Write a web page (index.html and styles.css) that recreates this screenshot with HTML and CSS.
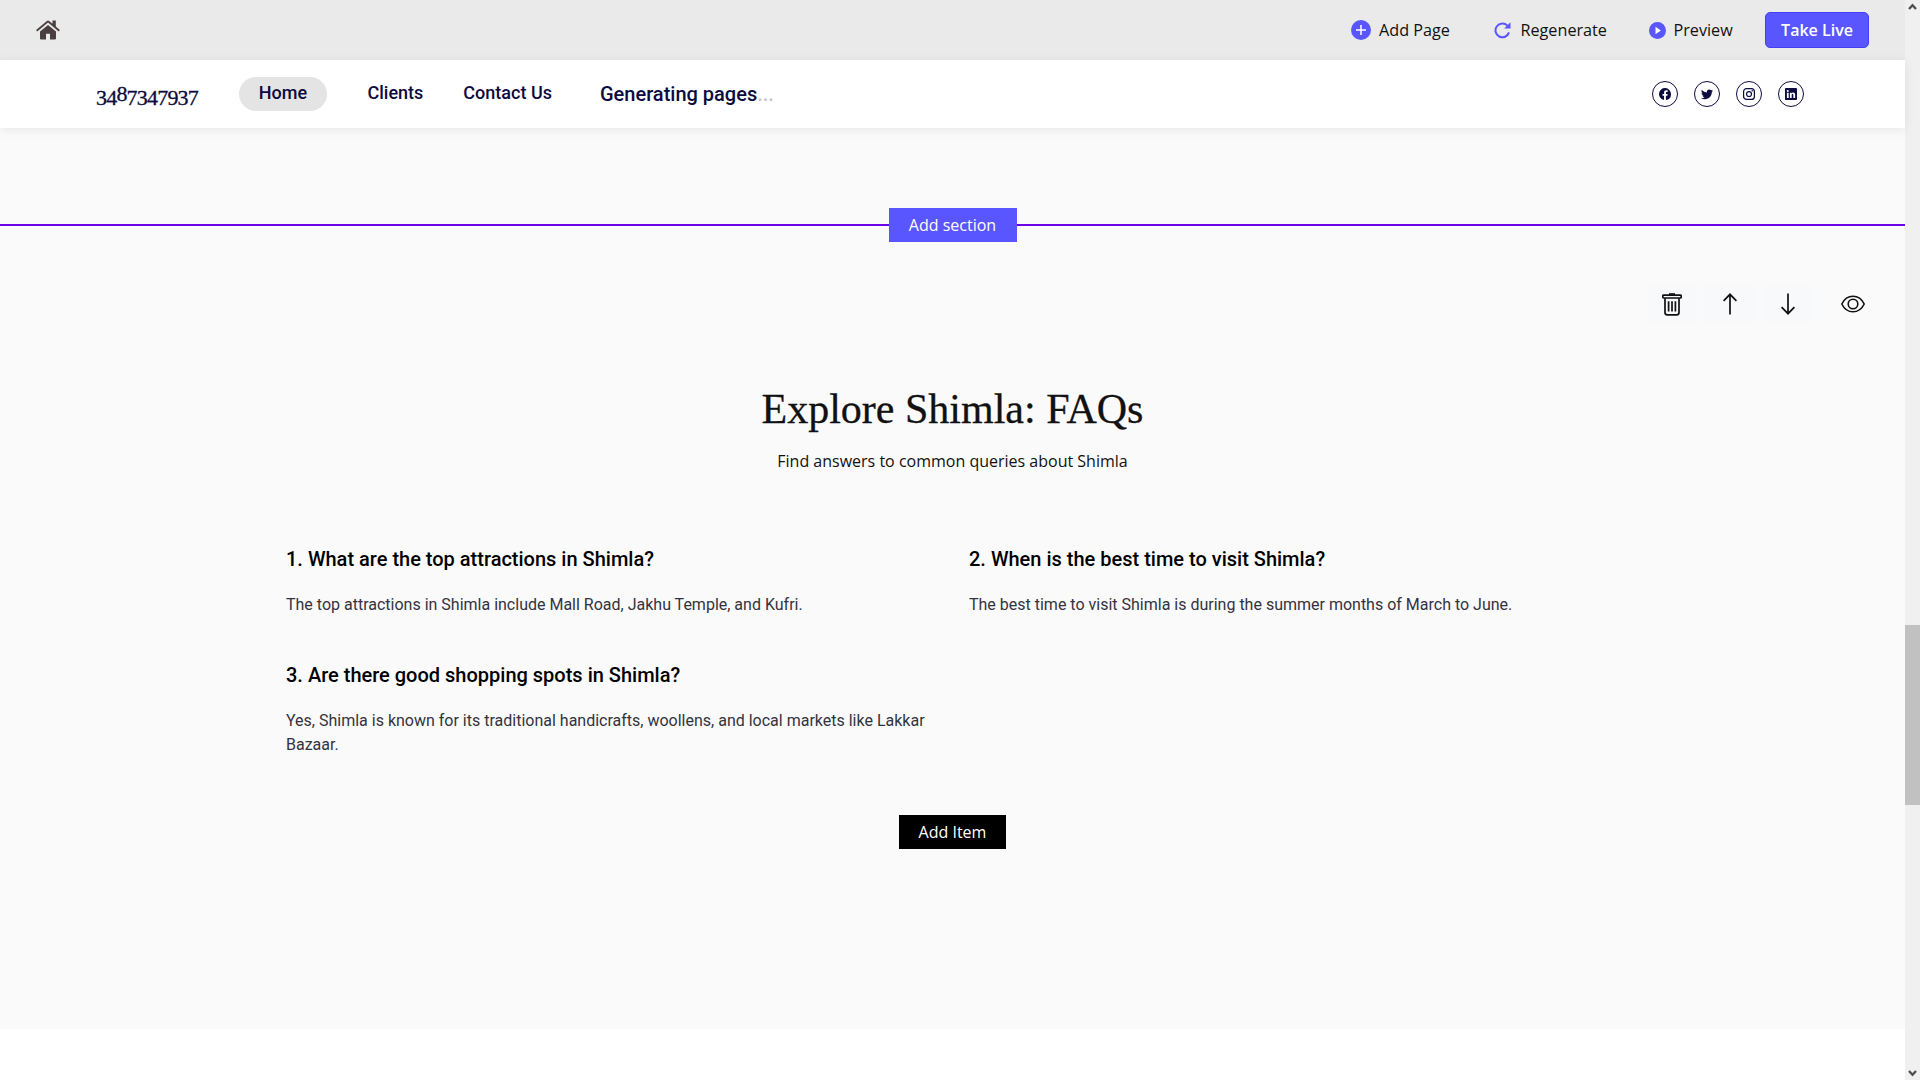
FILE: index.html
```html
<!DOCTYPE html>
<html lang="en">
<head>
<meta charset="utf-8">
<title>Explore Shimla: FAQs</title>
<link rel="stylesheet" href="styles.css">
</head>
<body>
<div class="window">
  <div class="page">
    <div class="toolbar">
      <svg class="home-icon" width="24" height="20" viewBox="0 0 24 20" fill="#4a3f40"><path d="M1.2 11.4 12 2.6l10.8 8.8 1.1-1.4-4.1-3.4V.6h-3.3v3.2L13.100.9a1.700 1.700 0 0 0-2.200 0L.1 10z"/><path d="M12 4.900 4 11.400V18.600c0 .5.3.8.8.8H10v-5.600h4v5.600h5.200c.5 0 .8-.3.8-.8v-7.200z"/></svg>
      <div class="tools">
        <a class="tool add-page"><svg width="20" height="20" viewBox="0 0 20 20"><circle cx="10" cy="10" r="10" fill="#5956ff"/><path d="M10 5v10M5 10h10" stroke="#fff" stroke-width="1.500"/></svg>Add Page</a>
        <a class="tool regenerate"><svg width="17" height="17" viewBox="0 0 17 17" fill="none" stroke="#5956ff" stroke-width="2"><path d="M15 10.400A6.900 6.900 0 1 1 13.400 3.600"/><path d="M16.500.3v6.300h-6.300z" fill="#5956ff" stroke="none"/></svg>Regenerate</a>
        <a class="tool preview"><svg width="17" height="17" viewBox="0 0 17 17"><circle cx="8.500" cy="8.500" r="8.500" fill="#5956ff"/><path d="M6.500 4.800v7.400l5.300-3.700z" fill="#fff"/></svg>Preview</a>
        <a class="take-live">Take Live</a>
      </div>
    </div>
    <header class="site-header">
      <div class="brand"><span class="low">34</span>8<span class="low">7347937</span></div>
      <nav class="nav">
        <a class="nav-item active">Home</a>
        <a class="nav-item clients">Clients</a>
        <a class="nav-item contact">Contact Us</a>
        <span class="generating">Generating pages<span class="dots">...</span></span>
      </nav>
      <div class="social">
        <a class="social-link"><svg width="12" height="12" viewBox="0 0 16 16" fill="#0c0a3e"><path d="M16 8.050a8 8 0 1 0-9.250 7.950v-5.620H4.720V8.050h2.030V6.280c0-2.020 1.200-3.130 3.020-3.130.88 0 1.790.16 1.790.16v1.980h-1c-1 0-1.310.62-1.310 1.260v1.500h2.220l-.35 2.330H9.250V16A8 8 0 0 0 16 8.050"/></svg></a>
        <a class="social-link"><svg width="12" height="12" viewBox="0 0 16 16" fill="#0c0a3e"><path d="M5.030 15c6.040 0 9.340-5 9.340-9.330v-.43A6.700 6.700 0 0 0 16 3.540a6.500 6.500 0 0 1-1.890.52 3.300 3.300 0 0 0 1.450-1.820 6.600 6.600 0 0 1-2.090.8 3.290 3.290 0 0 0-5.590 3A9.320 9.320 0 0 1 1.110 2.600a3.300 3.300 0 0 0 1.020 4.380A3.300 3.300 0 0 1 .64 6.580v.04a3.300 3.300 0 0 0 2.630 3.220 3.200 3.200 0 0 1-1.480.06 3.300 3.300 0 0 0 3.070 2.280A6.600 6.600 0 0 1 0 13.530 9.300 9.300 0 0 0 5.030 15"/></svg></a>
        <a class="social-link"><svg width="12" height="12" viewBox="0 0 16 16" fill="none" stroke="#0c0a3e" stroke-width="1.600"><rect x=".8" y=".8" width="14.400" height="14.400" rx="4"/><circle cx="8" cy="8" r="3.300"/><circle cx="12.300" cy="3.700" r="1" fill="#0c0a3e" stroke="none"/></svg></a>
        <a class="social-link"><svg width="12" height="12" viewBox="0 0 16 16"><rect width="16" height="16" rx="1.200" fill="#0c0a3e"/><path d="M2.500 6.200h2.400v7.200H2.500zM3.700 2.600a1.400 1.400 0 1 1 0 2.800 1.400 1.400 0 0 1 0-2.800M6.500 6.200h2.300v1c.4-.7 1.200-1.200 2.200-1.200 2 0 2.500 1.300 2.500 3.200v4.200h-2.400V9.700c0-.9-.1-1.700-1.100-1.700S8.900 8.800 8.900 9.700v3.700H6.500z" fill="#fff"/></svg></a>
      </div>
    </header>
    <main class="section">
      <div class="divider"><button class="add-section">Add section</button></div>
      <div class="section-tools">
        <span class="section-tool"><svg width="20" height="23" viewBox="0 0 20 23" fill="none" stroke="#111" stroke-width="1.700"><path d="M7 1.300h6" stroke-width="2.200"/><rect x=".8" y="2.200" width="18.400" height="2.800" rx=".8"/><path d="M3 5.200v14.300c0 1.400.8 2.300 2.200 2.300h9.600c1.400 0 2.200-.9 2.200-2.300V5.200M6.600 8.300v10.300M10 8.300v10.300M13.400 8.300v10.300"/></svg></span>
        <span class="section-tool"><svg width="14" height="22" viewBox="0 0 14 22" fill="none" stroke="#111" stroke-width="1.700"><path d="M7 21.500V1.300M.6 7.800 7 1.300l6.400 6.500"/></svg></span>
        <span class="section-tool"><svg width="14" height="22" viewBox="0 0 14 22" fill="none" stroke="#111" stroke-width="1.700"><path d="M7 .5v20.200M.6 14.200 7 20.700l6.400-6.500"/></svg></span>
        <span class="section-tool eye"><svg width="24" height="18" viewBox="0 0 24 18" fill="none" stroke="#111" stroke-width="1.600"><path d="M.8 9C3.200 4 7.300 1.200 12 1.200S20.800 4 23.200 9C20.800 14 16.700 16.800 12 16.800S3.200 14 .8 9z"/><circle cx="12" cy="9" r="4.800"/></svg></span>
      </div>
      <h2 class="title">Explore Shimla: FAQs</h2>
      <p class="subtitle">Find answers to common queries about Shimla</p>
      <div class="faq-grid">
        <article class="faq"><h3 class="question">1. What are the top attractions in Shimla?</h3><p class="answer">The top attractions in Shimla include Mall Road, Jakhu Temple, and Kufri.</p></article>
        <article class="faq"><h3 class="question">2. When is the best time to visit Shimla?</h3><p class="answer">The best time to visit Shimla is during the summer months of March to June.</p></article>
        <article class="faq"><h3 class="question">3. Are there good shopping spots in Shimla?</h3><p class="answer">Yes, Shimla is known for its traditional handicrafts, woollens, and local markets like Lakkar Bazaar.</p></article>
      </div>
      <button class="add-item">Add Item</button>
    </main>
  </div>
  <div class="scrollbar">
    <svg class="scroll-arrow" width="9" height="8" viewBox="0 0 9 8" fill="none" stroke="#505050" stroke-width="2.400"><path d="M1 6 4.500 2.300 8 6"/></svg>
    <div class="thumb"></div>
    <svg class="scroll-arrow" width="9" height="8" viewBox="0 0 9 8" fill="none" stroke="#505050" stroke-width="2.400"><path d="M1 2 4.500 5.700 8 2"/></svg>
  </div>
</div>
</body>
</html>
```

FILE: styles.css
```css
* { box-sizing: border-box; }
body { margin: 0; background: #fff; font-family: "Open Sans", "Noto Sans", sans-serif; }
h2, h3, p { margin: 0; }
svg { display: block; flex: none; }
button { border: 0; padding: 0; font: 16px "Open Sans", sans-serif; color: #fff; }

.window { display: flex; height: 1080px; overflow: hidden; }
.page { width: 1905px; display: flex; flex-direction: column; }

.toolbar { height: 60px; flex: none; background: #eaeaea; display: flex; align-items: center; justify-content: space-between; padding: 0 36px; }
.tools { display: flex; align-items: center; }
.tool { display: flex; align-items: center; font-size: 16.200px; color: #111; white-space: nowrap; }
.add-page { gap: 8px; width: 142.500px; }
.regenerate { gap: 10px; width: 155px; }
.preview { gap: 8px; width: 116.500px; }
.take-live { width: 104px; height: 36px; border: 1px solid #4340f5; border-radius: 5px; background: #5956ff; color: #fff; font-size: 16px; font-weight: 600; line-height: 34px; text-align: center; }

.site-header { height: 68px; flex: none; background: #fff; display: flex; align-items: center; padding: 0 101px 0 96px; color: #0c0a3e; position: relative; box-shadow: 0 2px 10px rgba(0, 0, 0, .08); font-family: Roboto, sans-serif; font-weight: 500; }
.brand { width: 143px; font: 22px "Liberation Serif", serif; letter-spacing: -.8px; line-height: 30px; -webkit-text-stroke: .3px #0c0a3e; }
.low { position: relative; top: 4px; }
.nav { display: flex; align-items: center; font-size: 18px; line-height: 34px; }
.nav-item { padding-bottom: 3px; }
.active { width: 88px; height: 34px; line-height: 32px; border-radius: 17px; background: #e4e4e4; text-align: center; padding: 0; }
.clients { margin-left: 40.500px; line-height: 31px; }
.contact { margin-left: 40px; line-height: 31px; }
.generating { margin-left: 48px; font-size: 20px; }
.dots { color: #c4c3d0; }
.social { margin-left: auto; display: flex; gap: 16px; }
.social-link { width: 26px; height: 26px; border: 1px solid #0c0a3e; border-radius: 50%; display: flex; align-items: center; justify-content: center; }

.section { height: 901px; flex: none; background: #fafafa; display: flex; flex-direction: column; align-items: center; padding-top: 80px; }
.divider { width: 100%; height: 34px; display: flex; align-items: center; justify-content: center; }
.divider::before, .divider::after { content: ""; flex: 1; height: 2px; background: #6a00e8; }
.add-section { width: 128px; height: 34px; background: #5956ff; }
.section-tools { align-self: flex-end; display: flex; gap: 8px; margin-top: 43px; padding-right: 27px; }
.section-tool { width: 50px; height: 38px; border-radius: 4px; background: #f8f9fb; display: flex; align-items: center; justify-content: center; }
.eye { margin-left: 7px; background: none; }
.title { margin-top: 56px; font: 400 42px/60px "Liberation Serif", serif; color: #111; white-space: nowrap; -webkit-text-stroke: .3px #111; }
.subtitle { margin-top: 10px; font-size: 16px; line-height: 24px; color: #111; }
.faq-grid { width: 1333px; display: grid; grid-template-columns: 651px 650px; column-gap: 32px; row-gap: 42px; margin-top: 71px; font-family: Roboto, sans-serif; }
.question { font-size: 20px; font-weight: 500; line-height: 30px; color: #000; }
.answer { margin-top: 19px; padding-bottom: 1px; font-size: 16px; line-height: 24px; color: #33333f; }
.add-item { width: 107px; height: 34px; margin-top: 57px; background: #000; }

.scrollbar { width: 15px; background: #f0f0f0; display: flex; flex-direction: column; align-items: center; justify-content: space-between; padding: 3px 0; }
.thumb { width: 15px; height: 180px; margin-top: 350px; background: #c1c1c1; }
```
